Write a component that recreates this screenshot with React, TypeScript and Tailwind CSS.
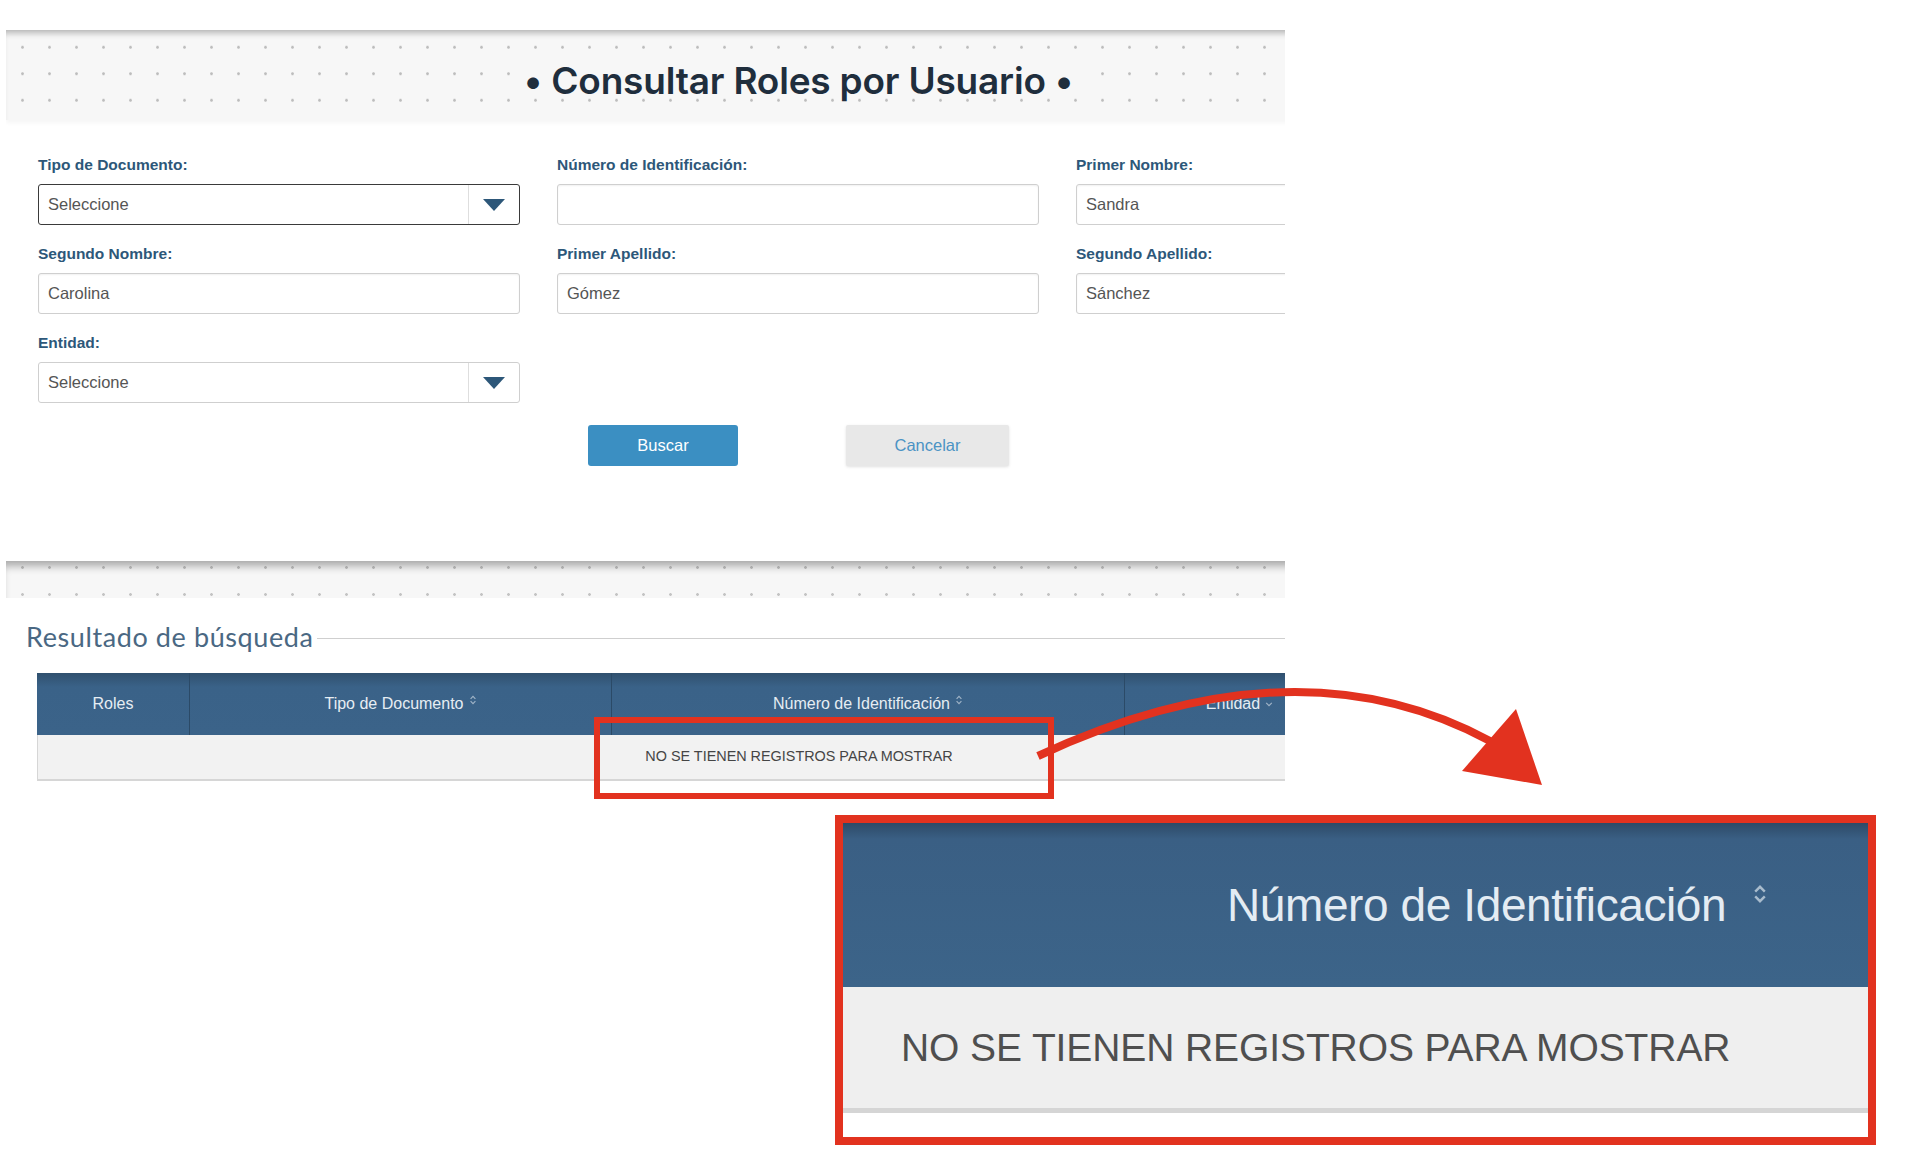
import React from 'react';

const SANS = "font-['Liberation_Sans',Arial,sans-serif]";
const LABEL = `${SANS} text-[15.5px] font-bold leading-[18px] text-[#2d5779] mb-[10px]`;
const BOX = 'h-[41px] rounded-[3px] border bg-white';

function SortIcon({ className }: { className?: string }) {
  return (
    <svg viewBox="0 0 10 16" className={className} fill="none" stroke="currentColor" strokeWidth="1.5">
      <path d="M2 6.5 L5 3.5 L8 6.5" />
      <path d="M2 9.5 L5 12.5 L8 9.5" />
    </svg>
  );
}

function Caret() {
  return (
    <svg viewBox="0 0 22 12" className="h-[12px] w-[22px]">
      <path d="M0 0 H22 L11 12 Z" fill="#2d5779" />
    </svg>
  );
}

function TextField({ label, value }: { label: string; value: string }) {
  return (
    <div>
      <div className={LABEL}>{label}</div>
      <div className={`${BOX} flex items-center border-[#cfcfcf] px-[9px] shadow-[inset_0_1px_2px_rgba(0,0,0,0.06)]`}>
        <span className={`${SANS} text-[16.5px] text-[#555]`}>{value}</span>
      </div>
    </div>
  );
}

function SelectField({ label, focused }: { label: string; focused?: boolean }) {
  return (
    <div>
      <div className={LABEL}>{label}</div>
      <div
        className={`${BOX} flex items-stretch ${
          focused ? 'border-[1.5px] border-[#3a3a3a]' : 'border-[#cfcfcf]'
        }`}
      >
        <span className={`${SANS} flex flex-1 items-center px-[9px] text-[16.5px] text-[#555]`}>Seleccione</span>
        <span className="flex w-[51px] items-center justify-center border-l border-[#dedede]">
          <Caret />
        </span>
      </div>
    </div>
  );
}

export default function App() {
  return (
    <div className="relative h-[1164px] w-[1922px] overflow-hidden bg-white">
      {/* captured page, cut at the right edge */}
      <div className="ml-[6px] w-[1279px] overflow-hidden pt-[30px]">
        <div className="w-[1585px]">
          {/* title band */}
          <div className="flex h-[90px] items-center justify-center bg-[#f7f7f7] bg-[radial-gradient(circle,#bdbdbd_1px,transparent_1.7px)] bg-size-[27px_26.5px] bg-position-[3px_4px] pt-[12px] shadow-[inset_0_7px_6px_-4px_rgba(0,0,0,0.28),0_3px_4px_rgba(0,0,0,0.04)]">
            <h1 className="bg-[#f7f7f7] px-[4px] font-['Inter',sans-serif] text-[37px] leading-[30px] font-semibold tracking-[-0.2px] text-[#1f2e3d]">
              • Consultar Roles por Usuario •
            </h1>
          </div>

          {/* search form */}
          <div className="px-[32px] pt-[36px] pb-[95px]">
            <div className="grid grid-cols-[482px_482px_482px] gap-x-[37px] gap-y-[20px]">
              <SelectField label="Tipo de Documento:" focused />
              <TextField label="Número de Identificación:" value="" />
              <TextField label="Primer Nombre:" value="Sandra" />
              <TextField label="Segundo Nombre:" value="Carolina" />
              <TextField label="Primer Apellido:" value="Gómez" />
              <TextField label="Segundo Apellido:" value="Sánchez" />
              <SelectField label="Entidad:" />
            </div>
            <div className="mt-[22px] flex justify-center gap-[108px]">
              <button className={`${SANS} h-[41px] w-[150px] rounded-[3px] bg-[#3b8fc2] text-[16.5px] text-white`}>
                Buscar
              </button>
              <button
                className={`${SANS} h-[41px] w-[163px] rounded-[2px] bg-[#e8e8e8] text-[16.5px] text-[#4b93c4] shadow-[0_1px_3px_rgba(0,0,0,0.12)]`}
              >
                Cancelar
              </button>
            </div>
          </div>

          {/* top of the results panel */}
          <div className="h-[37px] bg-[#f7f7f7] bg-[radial-gradient(circle,#c4c4c4_1px,transparent_1.7px)] bg-size-[27px_27px] bg-position-[3px_20px] shadow-[inset_0_9px_8px_-4px_rgba(0,0,0,0.32)]" />

          {/* results */}
          <div className="mt-[24px] flex h-[30px] items-center pl-[20px]">
            <span className="font-['Lato',sans-serif] text-[27px] leading-[30px] tracking-[0.6px] text-[#4a6883]">
              Resultado de búsqueda
            </span>
            <span className="ml-[3px] mt-[2px] h-px flex-1 bg-[#cfcfcf]" />
          </div>

          <div className={`${SANS} ml-[31px] mt-[21px] w-[1523px]`}>
            <div className="grid h-[62px] grid-cols-[153px_422px_513px_230px_1fr] bg-[linear-gradient(#30506e,#3a6288_14px,#3b6389)] text-[16px] text-[#e6edf3]">
              <div className="flex items-center justify-center border-r border-[#2b4a67]">Roles</div>
              <div className="flex items-center justify-center gap-[5px] border-r border-[#2b4a67]">
                Tipo de Documento
                <SortIcon className="mb-[8px] h-[14px] w-[8px] text-[#9fb3c6]" />
              </div>
              <div className="flex items-center justify-center gap-[5px] border-r border-[#2b4a67]">
                Número de Identificación
                <SortIcon className="mb-[8px] h-[14px] w-[8px] text-[#9fb3c6]" />
              </div>
              <div className="flex items-center justify-center gap-[5px] border-r border-[#2b4a67]">
                Entidad
                <svg viewBox="0 0 10 8" className="h-[7px] w-[8px]" fill="none" stroke="#9fb3c6" strokeWidth="1.5">
                  <path d="M1.5 2 L5 5.5 L8.5 2" />
                </svg>
              </div>
              <div />
            </div>
            <div className="flex h-[46px] items-center justify-center border-b-2 border-l border-[#d6d6d6] bg-[#f2f2f2] text-[14.4px] text-[#454545]">
              NO SE TIENEN REGISTROS PARA MOSTRAR
            </div>
          </div>
        </div>
      </div>

      {/* callout: red frame around the empty row */}
      <div className="absolute left-[594px] top-[717px] h-[82px] w-[460px] border-[6px] border-[#e2321f]" />

      {/* callout: curved arrow */}
      <svg className="pointer-events-none absolute left-0 top-0" width="1922" height="1164">
        <path d="M1038 756 Q1296 636 1490 741" fill="none" stroke="#e2321f" strokeWidth="8" />
        <polygon points="1462,771 1516,709 1542,785" fill="#e2321f" />
      </svg>

      {/* callout: enlarged view */}
      <div className={`${SANS} absolute left-[835px] top-[815px] flex h-[330px] w-[1041px] flex-col border-[8px] border-[#e2321f] bg-white`}>
        <div className="flex h-[164px] items-center bg-[linear-gradient(#2d4a67,#3a5f84_16px,#3c6489)] pl-[384px]">
          <span className="text-[46px] leading-[52px] tracking-[-0.4px] text-[#e4ecf3]">Número de Identificación</span>
          <SortIcon className="mb-[22px] ml-[26px] h-[34px] w-[16px] text-[#a9bccd]" />
        </div>
        <div className="flex h-[121px] items-center bg-[#efefef] pl-[58px]">
          <span className="text-[39px] leading-[44px] tracking-[-0.1px] text-[#4f4f4f]">NO SE TIENEN REGISTROS PARA MOSTRAR</span>
        </div>
        <div className="h-[5px] bg-[#d5d5d5]" />
        <div className="flex-1 bg-white" />
      </div>
    </div>
  );
}
